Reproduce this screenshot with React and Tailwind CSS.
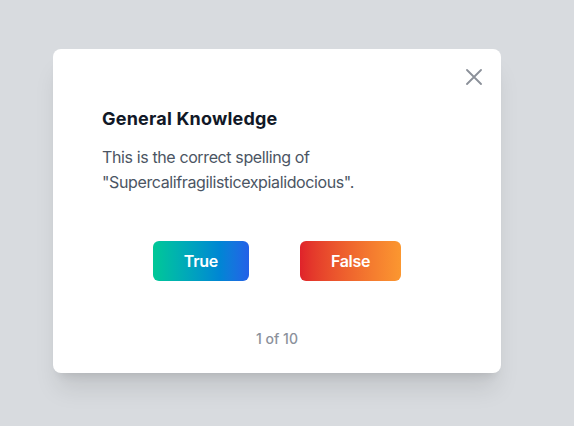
import React from "react";

function CloseIcon() {
  return (
    <svg width="16" height="16" viewBox="0 0 16 16" fill="none" stroke="currentColor" strokeWidth="1.8" strokeLinecap="round">
      <path d="M1 1l14 14M15 1L1 15" />
    </svg>
  );
}

export default function App() {
  return (
    <div
      className="min-h-screen bg-[#d8dbdf] pl-[53px] pt-[49px]"
      style={{ fontFamily: "Inter, 'Noto Sans', sans-serif" }}
    >
      <div className="relative w-[448px] rounded-lg bg-white px-[49px] pb-6 pt-[56px] shadow-xl">
        <button className="absolute right-[19px] top-[20px] text-[#8b9099]">
          <CloseIcon />
        </button>

        <h2 className="text-lg font-bold leading-7 tracking-[0.2px] text-[#111827]">General Knowledge</h2>
        <p className="mt-3 text-base leading-[25px] tracking-[-0.38px] text-[#4b5563]">
          This is the correct spelling of "Supercalifragilisticexpialidocious".
        </p>

        <div className="mt-[46px] flex justify-center gap-[51px]">
          <button className="h-10 rounded-md bg-gradient-to-r from-[#00c896] to-[#2360e8] px-[31px] text-base font-semibold tracking-[-0.3px] text-white">
            True
          </button>
          <button className="h-10 rounded-md bg-gradient-to-r from-[#e0222a] to-[#fb9730] px-[31px] text-base font-semibold tracking-[-0.3px] text-white">
            False
          </button>
        </div>

        <p className="mt-12 text-center text-sm font-medium leading-5 text-[#8b919b]">1 of 10</p>
      </div>
    </div>
  );
}
